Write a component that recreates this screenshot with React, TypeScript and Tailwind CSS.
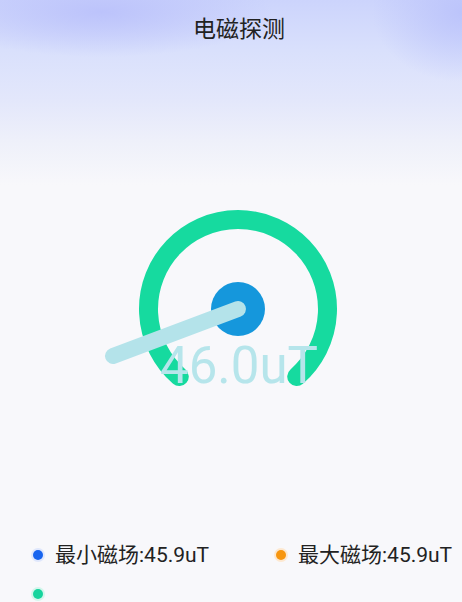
import React from 'react';

const font = "font-['Roboto','Noto_Sans_CJK_SC',sans-serif]";

const Legend: React.FC<{ dot: string; halo: string; label?: string }> = ({ dot, halo, label }) => (
  <div className="flex items-center h-[30px]">
    <div className={`w-[14px] h-[14px] rounded-full flex items-center justify-center ${halo}`}>
      <div className={`w-[10px] h-[10px] rounded-full ${dot}`}></div>
    </div>
    {label && <span className="ml-[10px] text-[21px] leading-[30px] text-[#222]">{label}</span>}
  </div>
);

const App: React.FC = () => {
  // gauge geometry (svg local coords)
  const cx = 139;
  const cy = 109;
  const r = 89.5;
  const a = (41 * Math.PI) / 180;
  const sx = cx - r * Math.sin(a);
  const sy = cy + r * Math.cos(a);
  const ex = cx + r * Math.sin(a);
  const arc = `M ${sx} ${sy} A ${r} ${r} 0 1 1 ${ex} ${sy}`;

  return (
    <div
      className={`w-full h-[602px] overflow-hidden ${font} bg-[radial-gradient(ellipse_170px_45px_at_22%_2%,#bcc3fb_0%,rgba(188,195,251,0)_100%),radial-gradient(ellipse_90px_70px_at_100%_2%,#bcc4fb_0%,rgba(188,196,251,0)_100%),linear-gradient(to_bottom,#ccd4fc_0px,#d9e0fc_50px,#e3e7fb_100px,#eef0fa_140px,#f8f8fb_185px,#f8f8fb_100%)]`}
    >
      {/* Title */}
      <div className="pt-[14px] pl-4 h-[46px] text-center text-[23px] leading-[32px] text-[#222]">电磁探测</div>

      {/* Gauge */}
      <div className="mt-[154px] pl-4 flex justify-center">
        <svg width="280" height="200" viewBox="0 0 280 200">
          <path d={arc} fill="none" stroke="#16da9f" strokeWidth="19" strokeLinecap="round" />
          <circle cx={cx} cy={cy} r="27" fill="#1597dc" />
          <line x1={cx} y1={cy} x2="14" y2="156" stroke="#b4e3ea" strokeWidth="16" strokeLinecap="round" />
          <text
            x="140"
            y="183"
            textAnchor="middle"
            fontSize="51"
            fill="#b6e5eb"
            fontFamily="Roboto, 'Noto Sans', sans-serif"
          >
            46.0uT
          </text>
        </svg>
      </div>

      {/* Legend */}
      <div className="mt-[140px] pl-[31px] grid grid-cols-[243px_1fr] gap-y-[9px]">
        <Legend dot="bg-[#1764ef]" halo="bg-[#dfe7fc]" label="最小磁场:45.9uT" />
        <Legend dot="bg-[#f7960f]" halo="bg-[#fde8d0]" label="最大磁场:45.9uT" />
        <Legend dot="bg-[#16d49d]" halo="bg-[#d4f6ec]" />
      </div>
    </div>
  );
};

export default App;
